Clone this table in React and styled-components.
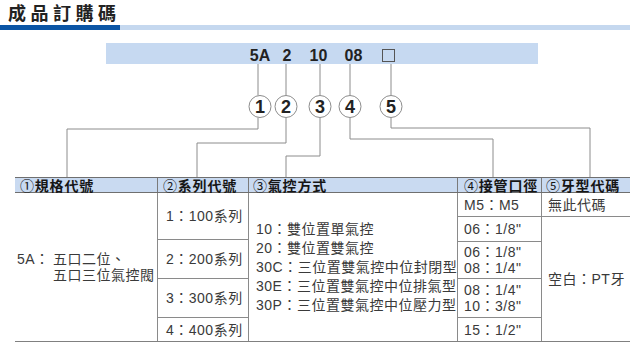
import React from "react";
import styled, { createGlobalStyle } from "styled-components";

const GlobalStyle = createGlobalStyle`
  body {
    margin: 0;
    background: #fff;
    font-family: "Liberation Sans", "Noto Sans CJK TC", sans-serif;
  }
`;

const Page = styled.div`
  width: 630px;
  height: 342px;
  overflow: hidden;
`;

const Title = styled.h1`
  margin: 0;
  height: 25px;
  padding-left: 8px;
  font: bold 18px/25px "Noto Sans CJK TC", sans-serif;
  letter-spacing: 4.5px;
  color: #222;
`;

const TitleRule = styled.div`
  height: 5px;
  background: linear-gradient(to right, #0b55a5 0 120px, #c5d8ef 120px);
`;

const CodeBar = styled.div`
  margin: 13px 0 0 106px;
  width: 432px;
  height: 21px;
  box-sizing: border-box;
  padding: 5px 0 0 140px;
  display: flex;
  background: #c6d9f1;
  font: bold 16px/16px "Liberation Sans", sans-serif;
  color: #222;
`;

const Slot = styled.span`
  width: ${(p) => p.$w}px;
  display: flex;
  justify-content: center;
`;

const EmptyBox = styled.span`
  width: 13px;
  height: 13px;
  margin-top: 1px;
  box-sizing: border-box;
  border: 1px solid #555;
`;

const Connectors = styled.svg`
  display: block;
`;

const Table = styled.div`
  margin-left: 15px;
`;

const cols = "142px 91px 209px 84px 89px";

const HeadRow = styled.div`
  display: grid;
  grid-template-columns: ${cols};
  height: 16px;
  box-sizing: border-box;
  border-top: 1px solid #6f6f6f;
  border-bottom: 1px solid #6f6f6f;
  background: #c9daf1;
`;

const HeadCell = styled.div`
  padding-left: ${(p) => p.$pad}px;
  border-left: ${(p) => (p.$first ? "none" : "1px solid #7a7a7a")};
  font: bold 14px/14px "Noto Sans CJK TC", sans-serif;
  letter-spacing: 0.8px;
  color: #161616;
  white-space: nowrap;
`;

const Num = styled.span`
  font-weight: 400;
`;

const Body = styled.div`
  display: grid;
  grid-template-columns: ${cols};
  height: 149px;
  box-sizing: border-box;
  border-bottom: 1px solid #808080;
`;

const Col = styled.div`
  display: flex;
  flex-direction: column;
  border-left: ${(p) => (p.$first ? "none" : "1px solid #8a8a8a")};
`;

const Cell = styled.div`
  height: ${(p) => (p.$h ? `${p.$h}px` : "auto")};
  flex: ${(p) => (p.$h ? "none" : "1")};
  box-sizing: border-box;
  display: flex;
  flex-direction: column;
  justify-content: center;
  padding-left: ${(p) => p.$pad}px;
  border-bottom: ${(p) => (p.$last ? "none" : "1px solid #8a8a8a")};
  font-size: 14px;
  line-height: ${(p) => p.$lh || 16}px;
  letter-spacing: 0.5px;
  color: #3a3a3a;
  white-space: nowrap;
`;

const SpecRow = styled.div`
  display: flex;
`;

const SpecLabel = styled.span`
  width: 36px;
  flex: none;
`;

const codes = [
  { text: "5A", w: 28 },
  { text: "2", w: 26 },
  { text: "10", w: 37 },
  { text: "08", w: 33 },
  { text: null, w: 37 },
];

const circles = [
  { n: 1, x: 260 },
  { n: 2, x: 286 },
  { n: 3, x: 320 },
  { n: 4, x: 350 },
  { n: 5, x: 391 },
];

// y in svg coords (svg starts at page y=64)
const paths = [
  "M258 0V31.5 M258 53.5V65H67V113",
  "M286 0V31.5 M286 53.5V79H197V113",
  "M320 0V31.5 M320 53.5V92H286V113",
  "M350 0V31.5 M350 53.5V75H493V113",
  "M391 0V31.5 M391 53.5V64H590V113",
];

export default function App() {
  return (
    <Page>
      <GlobalStyle />
      <Title>成品訂購碼</Title>
      <TitleRule />
      <CodeBar>
        {codes.map((c, i) => (
          <Slot key={i} $w={c.w}>
            {c.text ? c.text : <EmptyBox />}
          </Slot>
        ))}
      </CodeBar>

      <Connectors width="630" height="113" viewBox="0 0 630 113">
        <g stroke="#8c8c8c" strokeWidth="1" fill="none">
          {paths.map((d, i) => (
            <path key={i} d={d} />
          ))}
        </g>
        {circles.map((c) => (
          <g key={c.n}>
            <circle cx={c.x} cy="42.5" r="11" fill="#fff" stroke="#8c8c8c" strokeWidth="1" />
            <text
              x={c.x}
              y="49"
              textAnchor="middle"
              fontFamily="Liberation Sans, sans-serif"
              fontWeight="bold"
              fontSize="18"
              fill="#222"
            >
              {c.n}
            </text>
          </g>
        ))}
      </Connectors>

      <Table>
        <HeadRow>
          <HeadCell $first $pad={5}><Num>①</Num>規格代號</HeadCell>
          <HeadCell $pad={5}><Num>②</Num>系列代號</HeadCell>
          <HeadCell $pad={4}><Num>③</Num>氣控方式</HeadCell>
          <HeadCell $pad={6}><Num>④</Num>接管口徑</HeadCell>
          <HeadCell $pad={4}><Num>⑤</Num>牙型代碼</HeadCell>
        </HeadRow>
        <Body>
          <Col $first>
            <Cell $last $pad={2}>
              <SpecRow>
                <SpecLabel>5A：</SpecLabel>
                <div>
                  <div>五口二位、</div>
                  <div>五口三位氣控閥</div>
                </div>
              </SpecRow>
            </Cell>
          </Col>
          <Col>
            <Cell $h={47} $pad={8}>1：100系列</Cell>
            <Cell $h={39} $pad={8}>2：200系列</Cell>
            <Cell $h={39} $pad={8}>3：300系列</Cell>
            <Cell $last $pad={8}>4：400系列</Cell>
          </Col>
          <Col>
            <Cell $last $pad={7} $lh={19}>
              <div>10：雙位置單氣控</div>
              <div>20：雙位置雙氣控</div>
              <div>30C：三位置雙氣控中位封閉型</div>
              <div>30E：三位置雙氣控中位排氣型</div>
              <div>30P：三位置雙氣控中位壓力型</div>
            </Cell>
          </Col>
          <Col>
            <Cell $h={24} $pad={6}>M5：M5</Cell>
            <Cell $h={25} $pad={6}>06：1/8"</Cell>
            <Cell $h={37} $pad={6}>
              <div>06：1/8"</div>
              <div>08：1/4"</div>
            </Cell>
            <Cell $h={39} $pad={6}>
              <div>08：1/4"</div>
              <div>10：3/8"</div>
            </Cell>
            <Cell $last $pad={6}>15：1/2"</Cell>
          </Col>
          <Col>
            <Cell $h={24} $pad={6}>無此代碼</Cell>
            <Cell $last $pad={6}>空白：PT牙</Cell>
          </Col>
        </Body>
      </Table>
    </Page>
  );
}
